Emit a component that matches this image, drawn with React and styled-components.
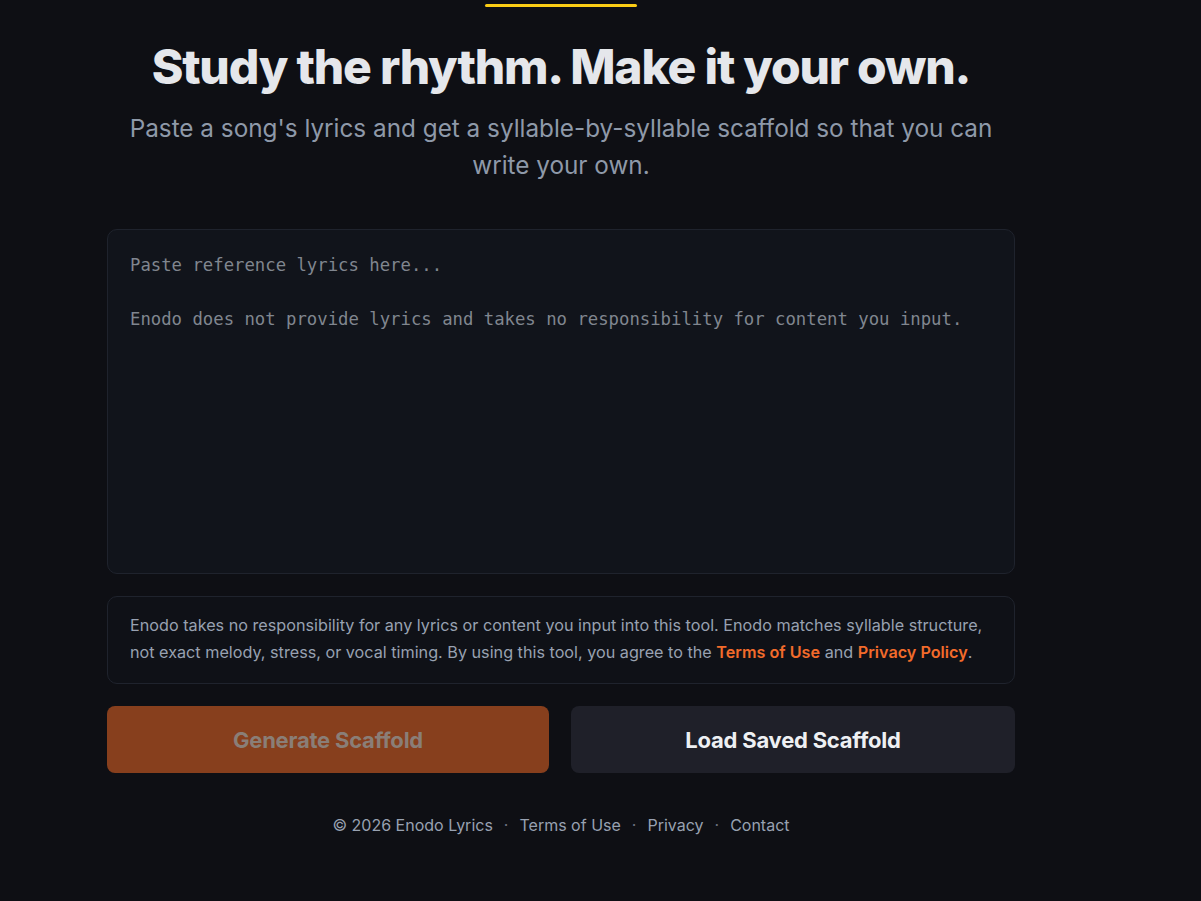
import React from "react";
import styled, { createGlobalStyle } from "styled-components";

const GlobalStyle = createGlobalStyle`
    html, body {
        margin: 0;
        padding: 0;
        background-color: #0e0f14;
    }
    body {
        font-family: Inter, "Noto Sans", sans-serif;
        color: #e5e7eb;
        min-height: 901px;
    }
    * { box-sizing: border-box; }
`;

const Page = styled.div`
    min-height: 901px;
    padding-left: 107px;
    background-color: #0e0f14;
`;

const Main = styled.main`
    width: 908px;
    display: flex;
    flex-direction: column;
    align-items: stretch;
`;

const Accent = styled.div`
    align-self: center;
    width: 152px;
    height: 3px;
    margin-top: 4px;
    border-radius: 2px;
    background-color: #facc15;
`;

const Title = styled.h1`
    margin: 30px 0 0;
    text-align: center;
    font-size: 48px;
    line-height: 60px;
    font-weight: 800;
    letter-spacing: -0.025em;
    color: #e5e7eb;
`;

const Subtitle = styled.p`
    margin: 13px 0 0;
    padding: 0 10px;
    text-align: center;
    font-size: 24.3px;
    line-height: 37px;
    font-weight: 400;
    color: #8e99a9;
`;

const LyricsInput = styled.textarea`
    margin-top: 45px;
    width: 100%;
    height: 345px;
    padding: 22px;
    resize: none;
    border: 1px solid #1f232d;
    border-radius: 10px;
    background-color: #11141b;
    color: #d1d5db;
    font-family: "DejaVu Sans Mono", "Liberation Mono", monospace;
    font-size: 17.3px;
    line-height: 27px;
    outline: none;

    &::placeholder {
        color: #80868f;
    }
`;

const Notice = styled.div`
    margin-top: 22px;
    padding: 15px 22px 17px;
    border: 1px solid #1f232d;
    border-radius: 10px;
    background-color: #0f1117;
    font-size: 16.2px;
    line-height: 27px;
    color: #98a1b1;
`;

const NoticeLink = styled.a`
    color: #f26b2b;
    font-weight: 600;
    text-decoration: none;
`;

const ButtonRow = styled.div`
    margin-top: 22px;
    display: grid;
    grid-template-columns: 442px 1fr;
    gap: 22px;
`;

const ActionButton = styled.button`
    height: 67px;
    border: none;
    border-radius: 8px;
    font-family: Inter, "Noto Sans", sans-serif;
    font-size: 22px;
    font-weight: 700;
    letter-spacing: -0.01em;
    cursor: ${props => (props.disabled ? "not-allowed" : "pointer")};
    background-color: ${props => (props.$primary ? "#873f1d" : "#1f2029")};
    color: ${props => (props.$primary ? "#8a7e77" : "#eef0f3")};
`;

const Footer = styled.footer`
    margin-top: 40px;
    display: flex;
    justify-content: center;
    align-items: center;
    gap: 11px;
    font-size: 16px;
    line-height: 24px;
    color: #98a1b1;
`;

const FooterLink = styled.a`
    color: inherit;
    text-decoration: none;
`;

const Dot = styled.span`
    color: #6b7280;
`;

export default function App() {
    return (
        <>
            <GlobalStyle />
            <Page>
                <Main>
                    <Accent />
                    <Title>Study the rhythm. Make it your own.</Title>
                    <Subtitle>
                        Paste a song's lyrics and get a syllable-by-syllable scaffold so that you can write your own.
                    </Subtitle>
                    <LyricsInput
                        placeholder={"Paste reference lyrics here...\n\nEnodo does not provide lyrics and takes no responsibility for content you input."}
                    />
                    <Notice>
                        Enodo takes no responsibility for any lyrics or content you input into this tool. Enodo matches syllable structure,
                        not exact melody, stress, or vocal timing. By using this tool, you agree to the{" "}
                        <NoticeLink href="#">Terms of Use</NoticeLink> and <NoticeLink href="#">Privacy Policy</NoticeLink>.
                    </Notice>
                    <ButtonRow>
                        <ActionButton $primary disabled>Generate Scaffold</ActionButton>
                        <ActionButton>Load Saved Scaffold</ActionButton>
                    </ButtonRow>
                    <Footer>
                        <span>© 2026 Enodo Lyrics</span>
                        <Dot>·</Dot>
                        <FooterLink href="#">Terms of Use</FooterLink>
                        <Dot>·</Dot>
                        <FooterLink href="#">Privacy</FooterLink>
                        <Dot>·</Dot>
                        <FooterLink href="#">Contact</FooterLink>
                    </Footer>
                </Main>
            </Page>
        </>
    );
}
